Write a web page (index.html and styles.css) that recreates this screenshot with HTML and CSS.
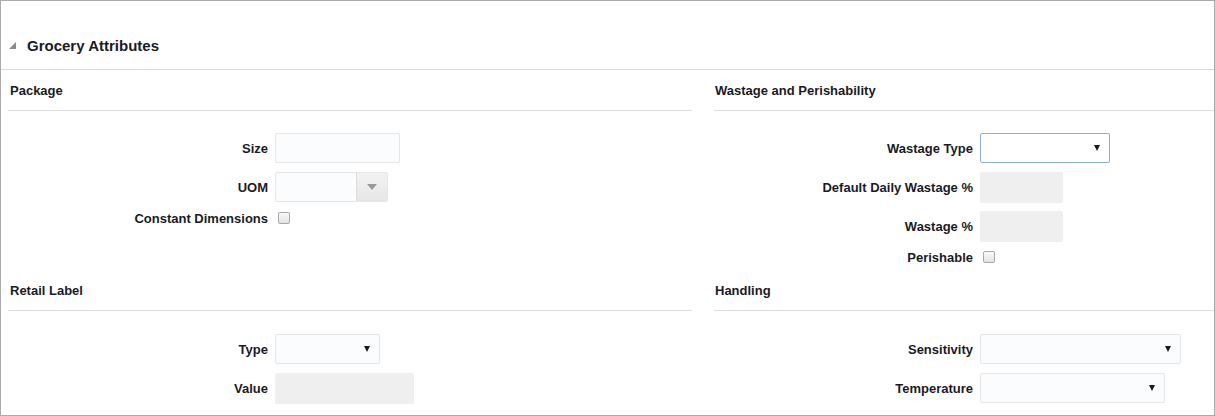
FILE: index.html
```html
<!DOCTYPE html>
<html lang="en">
<head>
<meta charset="UTF-8">
<title>Grocery Attributes</title>
<link rel="stylesheet" href="styles.css">
</head>
<body>

<div class="panel">
    <!-- panel header -->
    <div class="panel-head">
        <svg class="twisty" width="8" height="8" viewBox="0 0 8 8"><polygon points="7,0 7,7 0,7" fill="#8a8a8a"/></svg>
        <span>Grocery Attributes</span>
    </div>

    <div class="cols">
        <!-- Package -->
        <div class="section top left">
            <div class="sec-title">Package</div>
            <div class="form">
                <div class="row">
                    <label>Size</label>
                    <div class="field text w125"></div>
                </div>
                <div class="row">
                    <label>UOM</label>
                    <div class="field combo w113">
                        <span class="combo-btn"><i class="arrow-gray"></i></span>
                    </div>
                </div>
                <div class="row check-row">
                    <label>Constant Dimensions</label>
                    <span class="checkbox"></span>
                </div>
            </div>
        </div>

        <!-- Wastage and Perishability -->
        <div class="section top right">
            <div class="sec-title">Wastage and Perishability</div>
            <div class="form">
                <div class="row">
                    <label>Wastage Type</label>
                    <div class="field select focused w130"><i class="arrow"></i></div>
                </div>
                <div class="row">
                    <label>Default Daily Wastage %</label>
                    <div class="field readonly w83"></div>
                </div>
                <div class="row">
                    <label>Wastage %</label>
                    <div class="field readonly w83"></div>
                </div>
                <div class="row check-row">
                    <label>Perishable</label>
                    <span class="checkbox"></span>
                </div>
            </div>
        </div>

        <!-- Retail Label -->
        <div class="section left">
            <div class="sec-title">Retail Label</div>
            <div class="form">
                <div class="row">
                    <label>Type</label>
                    <div class="field select w105"><i class="arrow"></i></div>
                </div>
                <div class="row">
                    <label>Value</label>
                    <div class="field readonly w139"></div>
                </div>
            </div>
        </div>

        <!-- Handling -->
        <div class="section right">
            <div class="sec-title">Handling</div>
            <div class="form">
                <div class="row">
                    <label>Sensitivity</label>
                    <div class="field select w201"><i class="arrow"></i></div>
                </div>
                <div class="row">
                    <label>Temperature</label>
                    <div class="field select w185"><i class="arrow"></i></div>
                </div>
            </div>
        </div>
    </div>
</div>

</body>
</html>
```

FILE: styles.css
```css
body {
    margin: 0;
    font-family: 'Liberation Sans', Arial, sans-serif;
    color: #1a1a26;
    background: #fff;
}

.panel {
    width: 1215px;
    height: 416px;
    box-sizing: border-box;
    border: 1px solid #ababab;
    overflow: hidden;
}

.panel-head {
    height: 69px;
    display: flex;
    align-items: center;
    padding-left: 8px;
    padding-top: 20px;
    box-sizing: border-box;
    border-bottom: 1px solid #d9d9d9;
    font-size: 15px;
    font-weight: bold;
}

.twisty {
    margin-right: 10px;
    margin-top: 1px;
}

.cols {
    display: grid;
    grid-template-columns: 684px 1fr;
    column-gap: 22px;
    padding-left: 7px;
}

.section.top {
    padding-bottom: 6px;
}

.sec-title {
    height: 41px;
    box-sizing: border-box;
    border-bottom: 1px solid #dcdcdc;
    font-size: 13px;
    font-weight: bold;
    display: flex;
    align-items: center;
    padding-left: 2px;
    padding-top: 1px;
}

.right .sec-title {
    padding-left: 1px;
}

.form {
    padding-top: 22px;
    display: flex;
    flex-direction: column;
    gap: 9px;
}

.section:not(.top) .form {
    padding-top: 23px;
}

.row {
    display: flex;
    align-items: center;
    height: 30px;
}

.row label {
    width: 260px;
    text-align: right;
    font-size: 13px;
    font-weight: bold;
    margin-right: 7px;
}

.right .row label {
    width: 259px;
}

.check-row {
    height: 14px;
}

.field {
    height: 30px;
    box-sizing: border-box;
    border-radius: 2px;
    display: flex;
    align-items: center;
    justify-content: flex-end;
}

.text,
.select,
.combo {
    border: 1px solid #e4e6e8;
    background: #fbfcfd;
}

.select {
    padding-right: 9px;
}

.focused {
    border-color: #8eaee0;
    background: #fff;
}

.readonly {
    background: #efefef;
    height: 31px;
}

.combo {
    overflow: hidden;
}

.combo-btn {
    width: 30px;
    height: 100%;
    border-left: 1px solid #dcdcdc;
    background: linear-gradient(#f2f2f2, #e6e6e6);
    display: flex;
    align-items: center;
    justify-content: center;
}

.arrow {
    width: 0;
    height: 0;
    border-left: 3.5px solid transparent;
    border-right: 3.5px solid transparent;
    border-top: 6px solid #1a1a1a;
}

.arrow-gray {
    width: 0;
    height: 0;
    border-left: 5px solid transparent;
    border-right: 5px solid transparent;
    border-top: 6px solid #999;
}

.checkbox {
    width: 10px;
    height: 10px;
    border: 1px solid #a8a8a8;
    border-radius: 2px;
    background: linear-gradient(#fafafa, #e2e2e2);
    margin-left: 3px;
}

.w83 { width: 83px; }
.w105 { width: 105px; }
.w113 { width: 113px; }
.w125 { width: 125px; }
.w130 { width: 130px; }
.w139 { width: 139px; }
.w185 { width: 185px; }
.w201 { width: 201px; }
```
